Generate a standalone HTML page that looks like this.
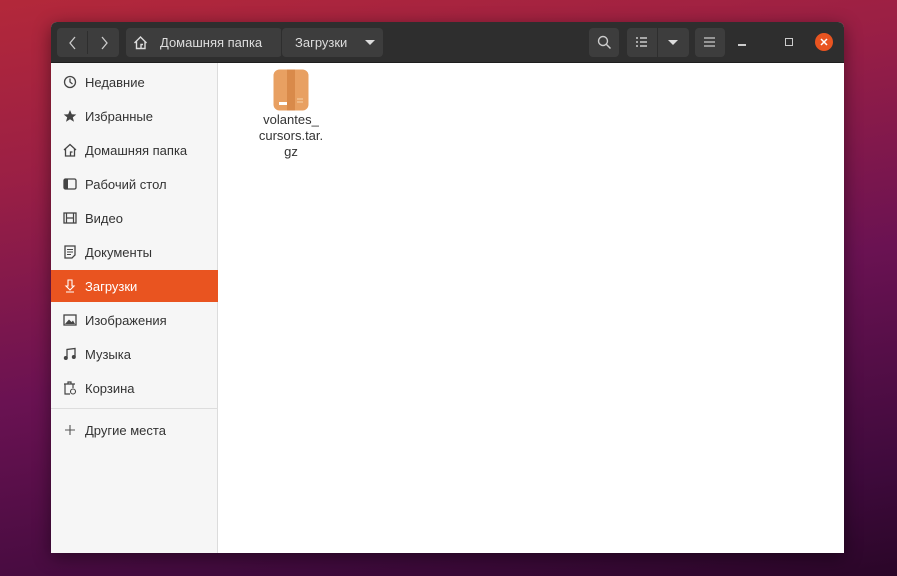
<!DOCTYPE html>
<html><head><meta charset="utf-8"><style>
*{margin:0;padding:0;box-sizing:border-box}
body{width:897px;height:576px;overflow:hidden;position:relative;font-family:"Liberation Sans","DejaVu Sans",sans-serif;
background:linear-gradient(170deg,#b3283a 0%,#9a1f45 25%,#6a1252 55%,#3f0a3c 85%,#2a0628 100%);}
.win{position:absolute;left:51px;top:22px;width:793px;height:531px;background:#fff;border-radius:6px 6px 0 0;overflow:hidden;box-shadow:0 4px 18px rgba(0,0,0,.45)}
.hdr{position:absolute;left:0;top:0;width:793px;height:41px;background:#2e2e2e;border-bottom:1px solid #1e1e1e}
.btn{position:absolute;top:6px;height:29px;background:#3d3d3d;border-radius:4px;color:#ddd;font-size:13px;display:flex;align-items:center}
.side{position:absolute;left:0;top:41px;width:167px;height:490px;background:#f6f6f6;border-right:1px solid #dcdcdc}
.row{position:absolute;left:0;width:167px;height:32px;display:flex;align-items:center;font-size:13px;color:#333}
.row svg{position:absolute;left:12px;top:9px}
.row span{position:absolute;left:34px}
.sel{background:#e95420;color:#fff}
</style></head><body>
<div class="win">
 <div class="hdr">
  <div class="btn" style="left:6px;width:62px"><div style="position:absolute;left:30px;top:3px;width:1px;height:23px;background:#2e2e2e"></div>
   <svg style="position:absolute;left:10px;top:8px" width="12" height="14"><path d="M8 1L3 7L8 13" stroke="#ccc" fill="none" stroke-width="1.3"/></svg>
   <svg style="position:absolute;left:41px;top:8px" width="12" height="14"><path d="M4 1L9 7L4 13" stroke="#ccc" fill="none" stroke-width="1.3"/></svg></div>
  <div class="btn" style="left:75px;width:156px"><svg style="position:absolute;left:7px;top:7px" width="15" height="15"><path d="M1.5 8L7.5 2L13.5 8M3.5 6.5V13.5H12V6.5M8 13.5V9.5H10" stroke="#ddd" fill="none" stroke-width="1.4"/></svg><span style="position:absolute;left:34px">Домашняя папка</span></div>
  <div style="position:absolute;left:230px;top:6px;width:1px;height:29px;background:#2e2e2e"></div>
  <div class="btn" style="left:231px;width:101px"><span style="position:absolute;left:13px">Загрузки</span><svg style="position:absolute;left:83px;top:12px" width="10" height="6"><path d="M0 0H10L5 5Z" fill="#ddd"/></svg></div>
  <div class="btn" style="left:538px;width:30px"><svg style="position:absolute;left:8px;top:7px" width="15" height="15"><circle cx="6" cy="6" r="4.5" stroke="#ccc" fill="none" stroke-width="1.4"/><path d="M9.5 9.5L13.5 13.5" stroke="#ccc" stroke-width="1.5"/></svg></div>
  <div class="btn" style="left:576px;width:62px"><div style="position:absolute;left:30px;top:0;width:1px;height:29px;background:#2e2e2e"></div>
   <svg style="position:absolute;left:9px;top:9px" width="12" height="11"><path d="M0 1H2M0 5H2M0 9H2M4 1H11M4 5H11M4 9H11" stroke="#ccc" stroke-width="1.5"/></svg>
   <svg style="position:absolute;left:41px;top:12px" width="10" height="6"><path d="M0 0H10L5 5Z" fill="#ddd"/></svg></div>
  <div class="btn" style="left:644px;width:30px"><svg style="position:absolute;left:9px;top:9px" width="12" height="11"><path d="M0 1H11M0 5H11M0 9H11" stroke="#ccc" stroke-width="1.2"/></svg></div>
  <div style="position:absolute;left:687px;top:22px;width:8px;height:1.5px;background:#ccc"></div>
  <div style="position:absolute;left:734px;top:16px;width:8px;height:8px;border:1.5px solid #ccc"></div>
  <div style="position:absolute;left:764px;top:11px;width:18px;height:18px;border-radius:50%;background:#e95420"><svg width="18" height="18"><path d="M6 6L12 12M12 6L6 12" stroke="#fff" stroke-width="1.5"/></svg></div>
 </div>
 <div class="side">
  <div class="row" style="top:3px"><svg width="14" height="14"><circle cx="7" cy="7" r="5.5" stroke="#444" fill="none" stroke-width="1.3"/><path d="M7 3.5V7L9.5 9" stroke="#444" fill="none" stroke-width="1.3"/></svg><span>Недавние</span></div>
  <div class="row" style="top:37px"><svg width="14" height="14"><path d="M7 1L8.8 5.2L13.3 5.5L9.8 8.4L11 12.8L7 10.3L3 12.8L4.2 8.4L0.7 5.5L5.2 5.2Z" fill="#444"/></svg><span>Избранные</span></div>
  <div class="row" style="top:71px"><svg width="14" height="14"><path d="M1 7L7 1.5L13 7M2.5 6V13H11.5V6M7.5 13V9H9.5" stroke="#444" fill="none" stroke-width="1.3"/></svg><span>Домашняя папка</span></div>
  <div class="row" style="top:105px"><svg width="14" height="14"><rect x="1" y="2" width="12" height="10" rx="1.5" stroke="#444" fill="none" stroke-width="1.3"/><rect x="1" y="2" width="4" height="10" fill="#444"/></svg><span>Рабочий стол</span></div>
  <div class="row" style="top:139px"><svg width="14" height="14"><rect x="1" y="2" width="12" height="10" stroke="#444" fill="none" stroke-width="1.3"/><path d="M3.5 2V12M10.5 2V12M3.5 7H10.5" stroke="#444" stroke-width="1.2"/></svg><span>Видео</span></div>
  <div class="row" style="top:173px"><svg width="14" height="14"><path d="M2 1H12V10L9 13H2Z" stroke="#444" fill="none" stroke-width="1.3"/><path d="M4 4.5H10M4 7H10M4 9.5H8" stroke="#444" stroke-width="1.1"/></svg><span>Документы</span></div>
  <div class="row sel" style="top:207px"><svg width="14" height="14"><path d="M5 1H9V7H11L7 11L3 7H5Z M3 13H11" stroke="#fff" fill="none" stroke-width="1.1"/></svg><span>Загрузки</span></div>
  <div class="row" style="top:241px"><svg width="14" height="14"><rect x="1" y="2" width="12" height="10" stroke="#444" fill="none" stroke-width="1.3"/><path d="M2 11L6 6.5L8.5 9L10 7.5L12 11Z" fill="#444"/></svg><span>Изображения</span></div>
  <div class="row" style="top:275px"><svg width="14" height="14"><path d="M4 11V2.5L12 1.5V10" stroke="#444" fill="none" stroke-width="1.3"/><circle cx="2.8" cy="11" r="2" fill="#444"/><circle cx="10.8" cy="10" r="2" fill="#444"/></svg><span>Музыка</span></div>
  <div class="row" style="top:309px"><svg width="14" height="14"><path d="M1 3H12M5 3V1H8V3M2 3V13H7M10 3V7" stroke="#444" fill="none" stroke-width="1.2"/><circle cx="10" cy="10.5" r="2.5" stroke="#444" fill="none" stroke-width="1.1"/></svg><span>Корзина</span></div>
  <div style="position:absolute;left:0;top:345px;width:167px;height:1px;background:#ddd"></div>
  <div class="row" style="top:351px"><svg width="14" height="14"><path d="M7 2V12M2 7H12" stroke="#555" stroke-width="1.1"/></svg><span>Другие места</span></div>
 </div>
 <svg style="position:absolute;left:222px;top:47px" width="36" height="42"><rect x="0.5" y="0.5" width="35" height="41" rx="6" fill="#e8a062"/><rect x="14" y="0.5" width="8" height="41" fill="#d98a4a"/><rect x="6" y="33" width="8" height="3" fill="#fff"/><path d="M24 30H30M24 33H30" stroke="#f6d2a8" stroke-width="1"/></svg>
 <div style="position:absolute;left:190px;top:90px;width:100px;text-align:center;font-size:13px;line-height:16px;color:#333">volantes_<br>cursors.tar.<br>gz</div>
</div>
</body></html>
